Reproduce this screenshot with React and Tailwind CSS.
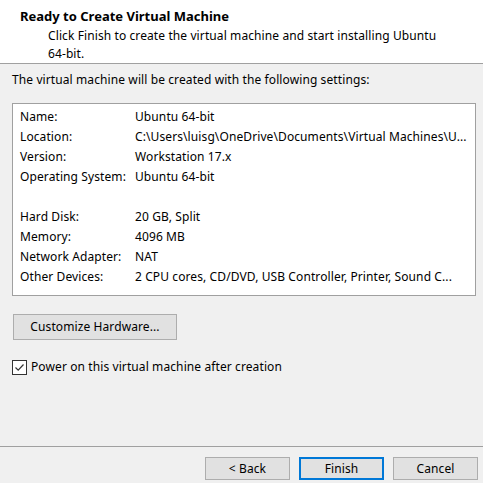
import React from "react";

const settings = [
  ["Name:", "Ubuntu 64-bit"],
  ["Location:", "C:\\Users\\luisg\\OneDrive\\Documents\\Virtual Machines\\U..."],
  ["Version:", "Workstation 17.x"],
  ["Operating System:", "Ubuntu 64-bit"],
  ["", ""],
  ["Hard Disk:", "20 GB, Split"],
  ["Memory:", "4096 MB"],
  ["Network Adapter:", "NAT"],
  ["Other Devices:", "2 CPU cores, CD/DVD, USB Controller, Printer, Sound C..."],
];

const WinButton = ({ children, primary }) => (
  <button
    className={
      primary
        ? "w-[85px] h-[23px] bg-[#e1e1e1] border-2 border-[#0078d7] text-[12px] text-black leading-none"
        : "w-[85px] h-[23px] bg-[#e1e1e1] border border-[#adadad] text-[12px] text-black leading-none"
    }
  >
    {children}
  </button>
);

const App = () => {
  return (
    <div className="w-[483px] h-[483px] bg-[#f0f0f0] flex flex-col overflow-hidden text-[12px] tracking-[0.1px] text-black font-['Noto_Sans',Arial,sans-serif]">
      <header className="h-[64px] bg-white border-b border-[#a0a0a0] pt-[7px]">
        <h1 className="pl-[20px] font-bold text-[13px] tracking-normal leading-[18px]">Ready to Create Virtual Machine</h1>
        <p className="pl-[48px] mt-[2px] leading-[18px] whitespace-nowrap">
          Click Finish to create the virtual machine and start installing Ubuntu
          <br />
          64-bit.
        </p>
      </header>

      <main className="px-[12px]">
        <p className="mt-[7px] leading-[18px]">The virtual machine will be created with the following settings:</p>

        <div className="mt-[14px] w-[464px] bg-white border border-[#a0a0a0] pt-[3px] pb-[8px] pl-[7px] overflow-hidden">
          {settings.map(([label, value], i) => (
            <div key={i} className="flex h-[20px] items-center whitespace-nowrap">
              <span className="w-[115px] shrink-0">{label}</span>
              <span>{value}</span>
            </div>
          ))}
        </div>

        <button className="mt-[18px] ml-[1px] w-[164px] h-[26px] bg-[#e1e1e1] border border-[#adadad] leading-none">
          Customize Hardware...
        </button>

        <label className="mt-[18px] flex items-center h-[18px] gap-[4px]">
          <span className="w-[15px] h-[15px] bg-white border border-[#333] flex items-center justify-center">
            <svg width="11" height="11" viewBox="0 0 11 11" fill="none">
              <path d="M1.5 5.5 L4.2 8.2 L9.5 2.5" stroke="#333" strokeWidth="1.2" />
            </svg>
          </span>
          <span>Power on this virtual machine after creation</span>
        </label>
      </main>

      <footer className="mt-auto h-[37px] border-t border-[#a0a0a0] pt-[10px] pr-[5px] flex justify-end gap-[9px]">
        <WinButton>&lt; Back</WinButton>
        <WinButton primary>Finish</WinButton>
        <WinButton>Cancel</WinButton>
      </footer>
    </div>
  );
};

export default App;
